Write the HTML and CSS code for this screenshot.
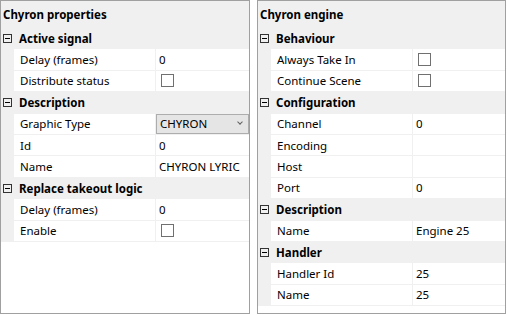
FILE: index.html
```html
<!DOCTYPE html>
<html lang="en">
<head>
    <meta charset="UTF-8">
    <meta name="viewport" content="width=device-width, initial-scale=1.0">
    <title>Chyron properties</title>
    <link rel="stylesheet" href="styles.css">
</head>
<body>
<div class="panes">
    <div class="pane">
        <div class="pane-title">Chyron properties</div>
        <div class="grid">
            <div class="cat"><span class="toggle"></span>Active signal</div>
            <div class="prop"><div class="name">Delay (frames)</div><div class="value">0</div></div>
            <div class="prop"><div class="name">Distribute status</div><div class="value"><span class="check"></span></div></div>
            <div class="cat"><span class="toggle"></span>Description</div>
            <div class="prop"><div class="name">Graphic Type</div><div class="value"><div class="combo"><span>CHYRON</span><span class="chevron"></span></div></div></div>
            <div class="prop"><div class="name">Id</div><div class="value">0</div></div>
            <div class="prop"><div class="name">Name</div><div class="value">CHYRON LYRIC</div></div>
            <div class="cat"><span class="toggle"></span>Replace takeout logic</div>
            <div class="prop"><div class="name">Delay (frames)</div><div class="value">0</div></div>
            <div class="prop"><div class="name">Enable</div><div class="value"><span class="check"></span></div></div>
        </div>
    </div>
    <div class="pane pane-right">
        <div class="pane-title">Chyron engine</div>
        <div class="grid">
            <div class="cat"><span class="toggle"></span>Behaviour</div>
            <div class="prop"><div class="name">Always Take In</div><div class="value"><span class="check"></span></div></div>
            <div class="prop"><div class="name">Continue Scene</div><div class="value"><span class="check"></span></div></div>
            <div class="cat"><span class="toggle"></span>Configuration</div>
            <div class="prop"><div class="name">Channel</div><div class="value">0</div></div>
            <div class="prop"><div class="name">Encoding</div><div class="value"></div></div>
            <div class="prop"><div class="name">Host</div><div class="value"></div></div>
            <div class="prop"><div class="name">Port</div><div class="value">0</div></div>
            <div class="cat"><span class="toggle"></span>Description</div>
            <div class="prop"><div class="name">Name</div><div class="value">Engine 25</div></div>
            <div class="cat"><span class="toggle"></span>Handler</div>
            <div class="prop"><div class="name">Handler Id</div><div class="value">25</div></div>
            <div class="prop"><div class="name">Name</div><div class="value">25</div></div>
        </div>
    </div>
</div>
</body>
</html>
```

FILE: styles.css
```css
body {
    margin: 0;
    background-color: #ffffff;
    font-family: 'Noto Sans', sans-serif;
    font-size: 11.5px;
    color: #000000;
}

.panes {
    display: flex;
    gap: 7px;
}

.pane {
    width: 250px;
    height: 314px;
    box-sizing: border-box;
    border: 1px solid #a0a0a0;
    background-color: #f0f0f0;
    display: flex;
    flex-direction: column;
}

.pane-right {
    width: 249px;
}

.pane-title {
    height: 27px;
    line-height: 27px;
    padding-left: 2px;
    font-weight: bold;
}

.grid {
    flex: 1;
    background-color: #ffffff;
}

.cat {
    height: 21.4px;
    display: flex;
    align-items: center;
    background-color: #f0f0f0;
    font-weight: bold;
    padding-left: 2px;
}

.toggle {
    width: 7px;
    height: 7px;
    border: 1px solid #333333;
    margin-right: 7px;
    position: relative;
}

.toggle::after {
    content: "";
    position: absolute;
    left: 1px;
    top: 3px;
    width: 5px;
    height: 1px;
    background: #000000;
}

.prop {
    height: 21.4px;
    box-sizing: border-box;
    display: grid;
    grid-template-columns: 13px 141px 1fr;
    border-bottom: 1px solid #f0f0f0;
}

.prop::before {
    content: "";
    background-color: #f0f0f0;
}

.name {
    display: flex;
    align-items: center;
    padding-left: 6px;
    white-space: nowrap;
}

.value {
    display: flex;
    align-items: center;
    border-left: 1px solid #f0f0f0;
    padding-left: 3px;
    white-space: nowrap;
    overflow: hidden;
}

.check {
    width: 11px;
    height: 11px;
    border: 1px solid #707070;
    margin-left: 2px;
}

.combo {
    margin-left: -3px;
    flex: 1;
    height: 20px;
    box-sizing: border-box;
    border: 1px solid #adadad;
    background-color: #e5e5e5;
    display: flex;
    align-items: center;
    justify-content: space-between;
    padding: 0 6px 0 3px;
}

.chevron {
    width: 3px;
    height: 3px;
    border-right: 1px solid #606060;
    border-bottom: 1px solid #606060;
    transform: rotate(45deg);
    margin-top: -3px;
}
```
